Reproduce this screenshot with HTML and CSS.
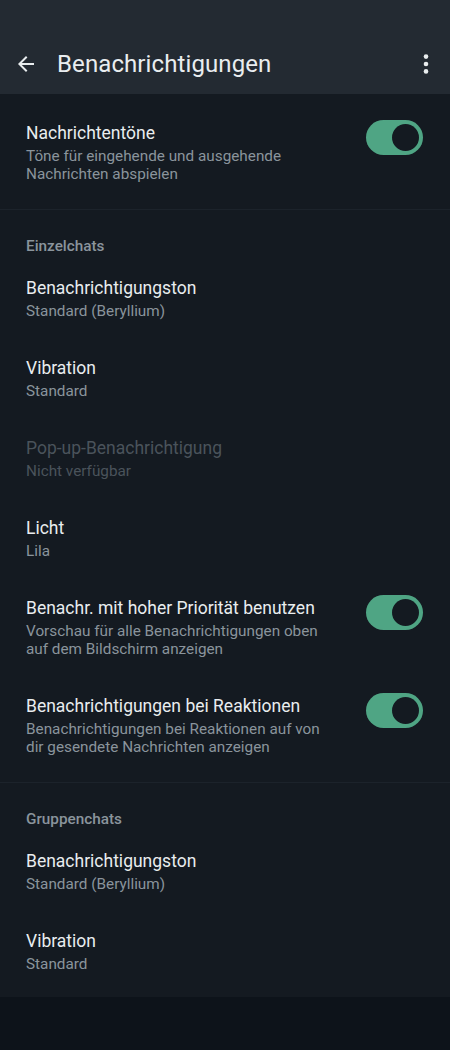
FILE: index.html
```html
<!DOCTYPE html>
<html lang="de">
<head>
    <meta charset="UTF-8">
    <meta name="viewport" content="width=device-width, initial-scale=1.0">
    <title>Benachrichtigungen</title>
    <link rel="stylesheet" href="styles.css">
</head>
<body>
    <header class="app-bar">
        <div class="app-bar-row">
            <svg class="back" viewBox="0 0 24 24" width="24" height="24">
                <path d="M20 11H7.83l5.59-5.59L12 4l-8 8 8 8 1.41-1.41L7.83 13H20v-2z" fill="#e9edef"/>
            </svg>
            <h1 class="title">Benachrichtigungen</h1>
            <svg class="more" viewBox="0 0 24 24" width="24" height="24">
                <circle cx="12" cy="4.6" r="2.3" fill="#e9edef"/>
                <circle cx="12" cy="12" r="2.3" fill="#e9edef"/>
                <circle cx="12" cy="19.4" r="2.3" fill="#e9edef"/>
            </svg>
        </div>
    </header>

    <main class="settings">
        <section class="section first">
            <div class="row">
                <div class="text">
                    <div class="row-title">Nachrichtentöne</div>
                    <div class="row-sub">Töne für eingehende und ausgehende Nachrichten abspielen</div>
                </div>
                <div class="switch"><span class="knob"></span></div>
            </div>
        </section>

        <section class="section">
            <div class="section-label">Einzelchats</div>
            <div class="row">
                <div class="text">
                    <div class="row-title">Benachrichtigungston</div>
                    <div class="row-sub">Standard (Beryllium)</div>
                </div>
            </div>
            <div class="row">
                <div class="text">
                    <div class="row-title">Vibration</div>
                    <div class="row-sub">Standard</div>
                </div>
            </div>
            <div class="row disabled">
                <div class="text">
                    <div class="row-title">Pop-up-Benachrichtigung</div>
                    <div class="row-sub">Nicht verfügbar</div>
                </div>
            </div>
            <div class="row">
                <div class="text">
                    <div class="row-title">Licht</div>
                    <div class="row-sub">Lila</div>
                </div>
            </div>
            <div class="row">
                <div class="text">
                    <div class="row-title">Benachr. mit hoher Priorität benutzen</div>
                    <div class="row-sub">Vorschau für alle Benachrichtigungen oben auf dem Bildschirm anzeigen</div>
                </div>
                <div class="switch"><span class="knob"></span></div>
            </div>
            <div class="row">
                <div class="text">
                    <div class="row-title">Benachrichtigungen bei Reaktionen</div>
                    <div class="row-sub">Benachrichtigungen bei Reaktionen auf von dir gesendete Nachrichten anzeigen</div>
                </div>
                <div class="switch"><span class="knob"></span></div>
            </div>
        </section>

        <section class="section last">
            <div class="section-label">Gruppenchats</div>
            <div class="row">
                <div class="text">
                    <div class="row-title">Benachrichtigungston</div>
                    <div class="row-sub">Standard (Beryllium)</div>
                </div>
            </div>
            <div class="row">
                <div class="text">
                    <div class="row-title">Vibration</div>
                    <div class="row-sub">Standard</div>
                </div>
            </div>
        </section>
    </main>
</body>
</html>
```

FILE: styles.css
```css
body {
    margin: 0;
    padding: 0;
    background-color: #0d131a;
    font-family: Roboto, 'Noto Sans', sans-serif;
    color: #e9edef;
    min-height: 1050px;
}
.app-bar {
    background-color: #232a32;
    height: 94px;
    box-sizing: border-box;
    padding-top: 40px;
}
.app-bar-row {
    display: flex;
    align-items: center;
    height: 48px;
    padding: 0 12px 0 14px;
}
.back {
    flex: none;
}
.title {
    flex: 1;
    margin: 0 0 0 19px;
    font-size: 24px;
    font-weight: 400;
    letter-spacing: 0.1px;
    color: #e9edef;
}
.more {
    flex: none;
}
.settings {
    background-color: #141a21;
}
.section {
    padding: 8px 0;
    border-bottom: 1px solid #1c232b;
}
.section.first {
    padding-top: 9px;
}
.section.last {
    border-bottom: none;
    padding-bottom: 6px;
}
.section-label {
    padding: 18px 26px 2px;
    font-size: 15.3px;
    line-height: 20px;
    font-weight: 500;
    color: #8a949c;
}
.row {
    display: flex;
    align-items: flex-start;
    padding: 19px 27px 18px 26px;
}
.text {
    flex: 1;
    min-width: 0;
}
.row-title {
    font-size: 17.5px;
    line-height: 22px;
    color: #e9edef;
}
.row-sub {
    margin-top: 3px;
    font-size: 15.3px;
    line-height: 18px;
    color: #8a949c;
    max-width: 302px;
}
.disabled .row-title,
.disabled .row-sub {
    color: #4a535b;
}
.switch {
    flex: none;
    width: 57px;
    height: 35px;
    margin: -2px 0 0 20px;
    border-radius: 18px;
    background-color: #4fa584;
    display: flex;
    align-items: center;
    justify-content: flex-end;
    padding-right: 4px;
    box-sizing: border-box;
}
.knob {
    width: 27px;
    height: 27px;
    border-radius: 50%;
    background-color: #141a21;
}
```
